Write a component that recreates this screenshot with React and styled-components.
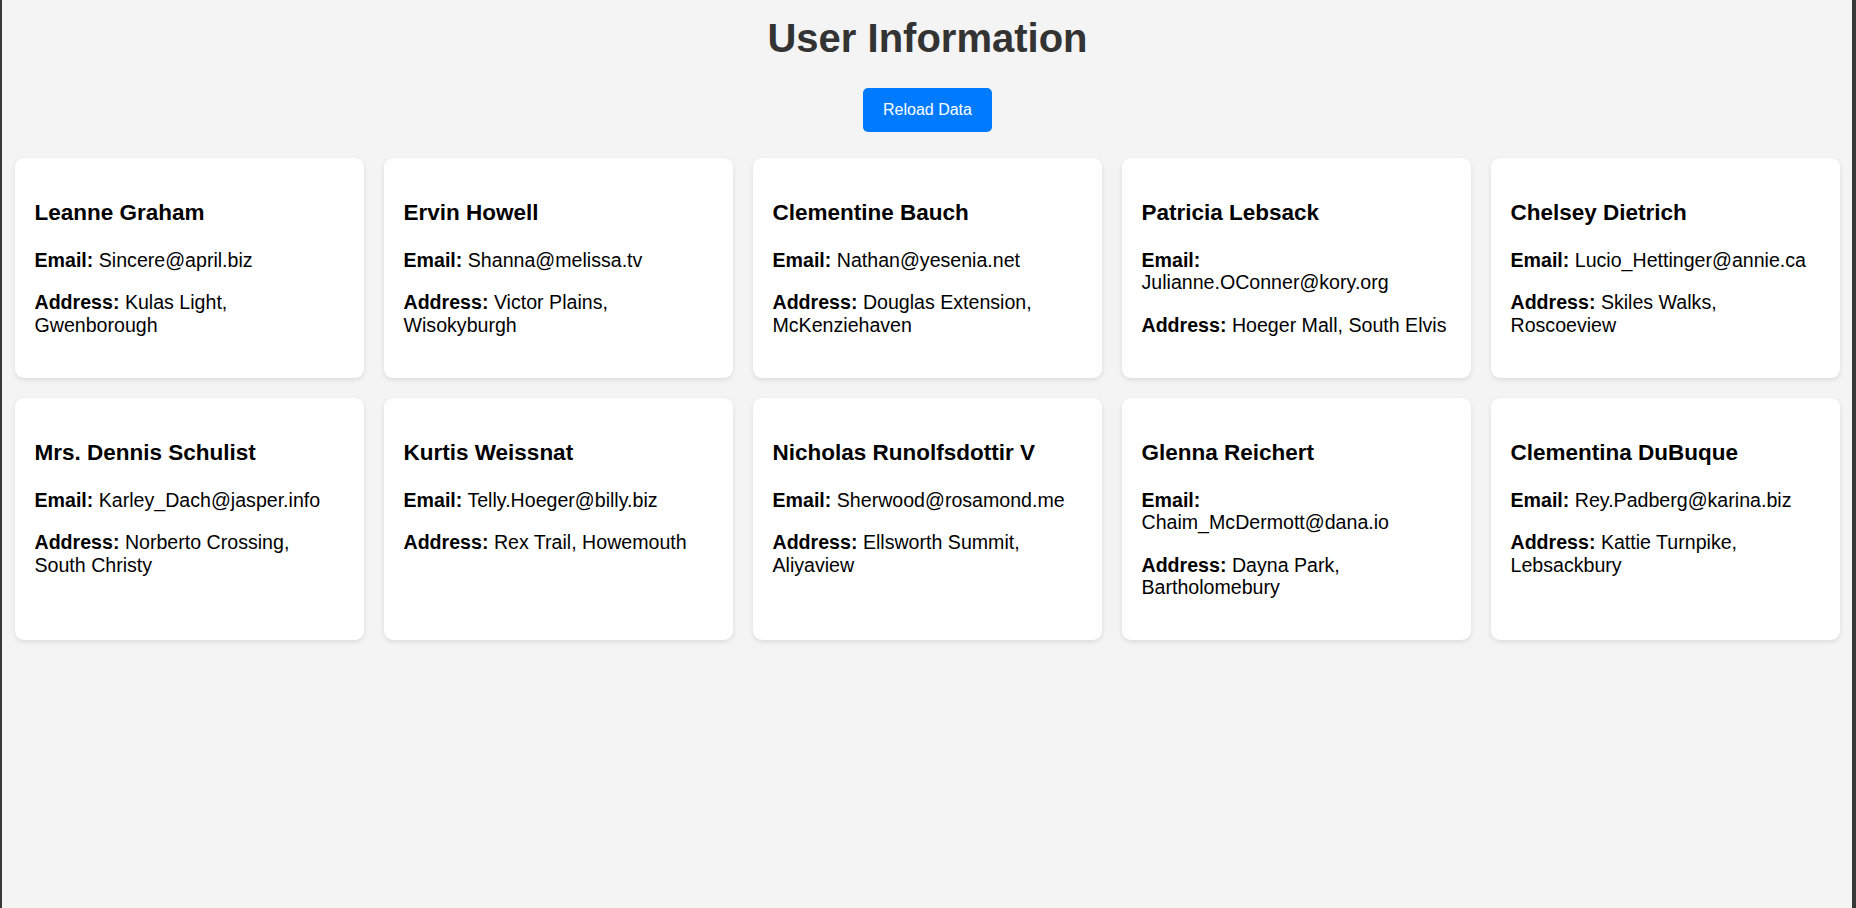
import styled, { createGlobalStyle } from "styled-components";

const users = [
    { name: "Leanne Graham", email: "Sincere@april.biz", street: "Kulas Light", city: "Gwenborough" },
    { name: "Ervin Howell", email: "Shanna@melissa.tv", street: "Victor Plains", city: "Wisokyburgh" },
    { name: "Clementine Bauch", email: "Nathan@yesenia.net", street: "Douglas Extension", city: "McKenziehaven" },
    { name: "Patricia Lebsack", email: "Julianne.OConner@kory.org", street: "Hoeger Mall", city: "South Elvis" },
    { name: "Chelsey Dietrich", email: "Lucio_Hettinger@annie.ca", street: "Skiles Walks", city: "Roscoeview" },
    { name: "Mrs. Dennis Schulist", email: "Karley_Dach@jasper.info", street: "Norberto Crossing", city: "South Christy" },
    { name: "Kurtis Weissnat", email: "Telly.Hoeger@billy.biz", street: "Rex Trail", city: "Howemouth" },
    { name: "Nicholas Runolfsdottir V", email: "Sherwood@rosamond.me", street: "Ellsworth Summit", city: "Aliyaview" },
    { name: "Glenna Reichert", email: "Chaim_McDermott@dana.io", street: "Dayna Park", city: "Bartholomebury" },
    { name: "Clementina DuBuque", email: "Rey.Padberg@karina.biz", street: "Kattie Turnpike", city: "Lebsackbury" },
];

export default function App() {
    return (
        <>
            <GlobalStyle />
            <Page>
                <Title>User Information</Title>
                <Actions>
                    <ReloadButton type="button">Reload Data</ReloadButton>
                </Actions>
                <Grid>
                    {users.map((user) => (
                        <Card key={user.email}>
                            <Name>{user.name}</Name>
                            <Line><strong>Email:</strong> {user.email}</Line>
                            <Line><strong>Address:</strong> {user.street}, {user.city}</Line>
                        </Card>
                    ))}
                </Grid>
            </Page>
        </>
    )
}

const GlobalStyle = createGlobalStyle`
    html, body {
        margin: 0;
        padding: 0;
        background-color: #f4f4f4;
    }
    body {
        font-family: "Liberation Sans", Arial, sans-serif;
    }
`

const Page = styled.div`
    box-sizing: border-box;
    min-height: 908px;
    padding: 15.5px 12px 0 13px;
    background-color: #f4f4f4;
    border-left: 2px solid #383838;
    border-right: 4px solid #383838;
`

const Title = styled.h1`
    margin: 0 0 27px;
    text-align: center;
    font-size: 40px;
    font-weight: bold;
    color: #333;
`

const Actions = styled.div`
    display: flex;
    justify-content: center;
    margin-bottom: 26px;
`

const ReloadButton = styled.button`
    height: 44px;
    padding: 0 20px;
    border: none;
    border-radius: 5px;
    background-color: #007bff;
    color: #fff;
    font-family: "Liberation Sans", Arial, sans-serif;
    font-size: 16px;
    cursor: pointer;
    &:hover {
        background-color: #0069d9;
    }
`

const Grid = styled.div`
    display: grid;
    grid-template-columns: repeat(5, 1fr);
    gap: 20px;
`

const Card = styled.div`
    background-color: #fff;
    border-radius: 9px;
    padding: 20px 19.5px 21px;
    box-shadow: 0 2px 5px rgba(0, 0, 0, 0.1);
    color: #000;
`

const Name = styled.h3`
    margin: 22px 0 23px;
    font-size: 22.5px;
    font-weight: bold;
`

const Line = styled.p`
    margin: 0 0 20.4px;
    font-size: 19.6px;
    line-height: 22.4px;
    strong {
        font-weight: bold;
    }
`
